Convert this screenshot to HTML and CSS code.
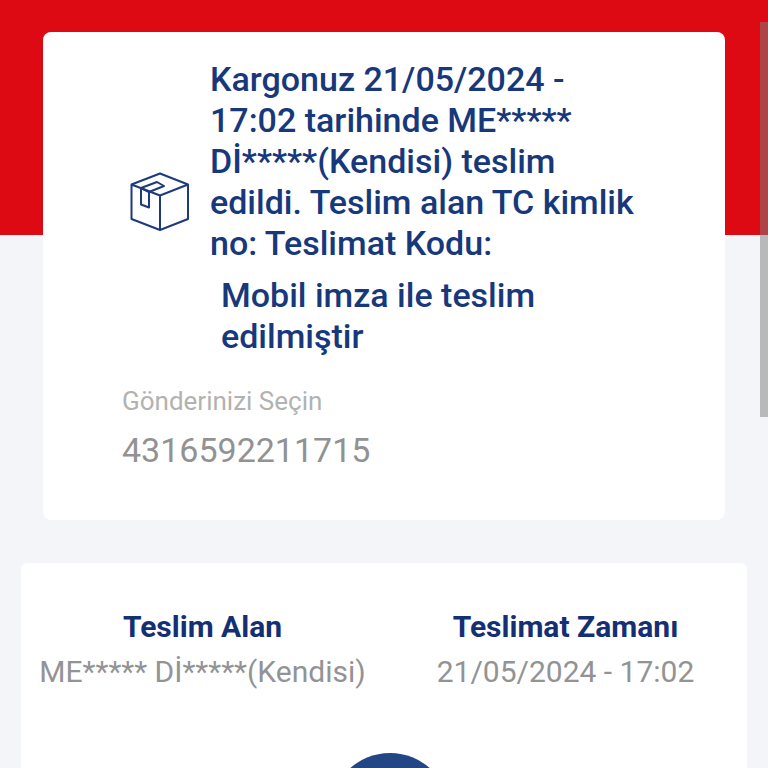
FILE: index.html
```html
<!DOCTYPE html>
<html lang="tr">
<head>
    <meta charset="UTF-8">
    <meta name="viewport" content="width=device-width, initial-scale=1.0">
    <title>Gönderi Takip</title>
    <link rel="stylesheet" href="styles.css">
</head>
<body>
    <main class="page">
        <section class="status-card">
            <div class="status-row">
                <svg class="box-icon" viewBox="0 0 60 60" aria-hidden="true">
                    <path d="M1.500 12.500 L30 1.500 L58 12.500 L30 23.500 Z M1.500 12.500 V47 L30 58 L58 47 V12.500 M30 23.500 V58"/>
                    <path d="M11 16 L27 10 L34 14 L19 20 M11 16 V32.500 L19 35.500 V20 L11 16"/>
                </svg>
                <div class="status-text">
                    <p>Kargonuz 21/05/2024 - 17:02 tarihinde ME***** Dİ*****(Kendisi) teslim edildi. Teslim alan TC kimlik no: Teslimat Kodu:</p>
                    <p class="status-note">Mobil imza ile teslim edilmiştir</p>
                </div>
            </div>
            <div class="shipment">
                <label for="shipment">Gönderinizi Seçin</label>
                <select id="shipment">
                    <option>4316592211715</option>
                </select>
            </div>
        </section>

        <section class="detail-card">
            <dl class="details">
                <div class="detail">
                    <dt>Teslim Alan</dt>
                    <dd>ME***** Dİ*****(Kendisi)</dd>
                </div>
                <div class="detail">
                    <dt>Teslimat Zamanı</dt>
                    <dd>21/05/2024 - 17:02</dd>
                </div>
            </dl>
            <div class="steps">
                <div class="step-dot"></div>
            </div>
        </section>
    </main>
    <div class="scroll-thumb"></div>
</body>
</html>
```
FILE: styles.css
```css
* {
    box-sizing: border-box;
}

body {
    margin: 0;
    font-family: Roboto, 'Liberation Sans', sans-serif;
    background-color: #f3f5f8;
    color: #929395;
}

p,
dl,
dd {
    margin: 0;
}

.page {
    height: 100vh;
    overflow: hidden;
    padding-top: 32px;
    background: linear-gradient(#dd0a13, #dd0a13) no-repeat top / 100% 235px;
}

.status-card {
    margin: 0 43px;
    padding: 27px 80px 50px 79px;
    background-color: #fff;
    border-radius: 8px;
}

.status-row {
    display: flex;
    align-items: center;
    gap: 20px;
    padding-left: 8px;
}

.box-icon {
    flex: none;
    width: 60px;
    height: 60px;
    margin-bottom: 12px;
    fill: none;
    stroke: #1d3a7c;
    stroke-width: 2;
    stroke-linejoin: round;
}

.status-text {
    color: #17387b;
    font-size: 34px;
    font-weight: 500;
    line-height: 41px;
}

.status-note {
    margin-top: 11px;
    padding-left: 11px;
}

.shipment {
    display: flex;
    flex-direction: column;
    align-items: flex-start;
    gap: 13px;
    margin-top: 28px;
}

.shipment label {
    color: #b2b2b2;
    font-size: 26px;
    line-height: 32px;
}

.shipment select {
    appearance: none;
    width: 100%;
    padding: 0;
    border: none;
    background: none;
    color: #929292;
    font-family: inherit;
    font-size: 34px;
    line-height: 40px;
}

.detail-card {
    margin: 43px 21px 0;
    padding: 46px 0;
    background-color: #fff;
    border-radius: 6px;
}

.details {
    display: grid;
    grid-template-columns: 1fr 1fr;
}

.detail {
    text-align: center;
    font-size: 30px;
    line-height: 36px;
}

.detail dt {
    margin-bottom: 9px;
    color: #142f74;
    font-weight: 700;
}

.steps {
    display: flex;
    justify-content: center;
    margin-top: 63px;
    padding-left: 12px;
}

.step-dot {
    width: 120px;
    height: 120px;
    border-radius: 50%;
    background-color: #234686;
}

.scroll-thumb {
    position: fixed;
    top: 22px;
    right: 0;
    width: 8px;
    height: 395px;
    background-color: rgba(126, 126, 126, 0.5);
}
```
